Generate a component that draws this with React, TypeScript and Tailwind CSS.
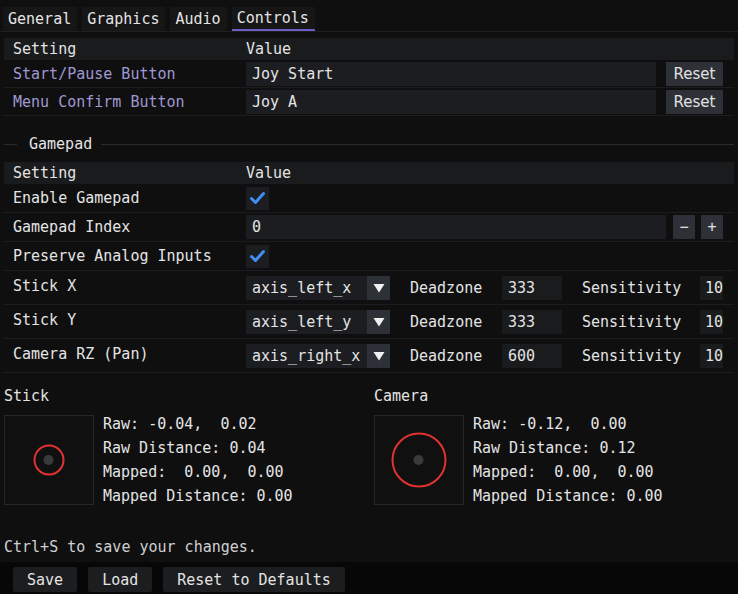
import React from 'react';

const mono = "[font-family:'DejaVu_Sans_Mono',monospace]";

const tabs = ['General', 'Graphics', 'Audio', 'Controls'];

function Check() {
  return (
    <div className="w-[23px] h-[23px] bg-[#1c1d20] flex items-center justify-center">
      <svg width="17" height="17" viewBox="0 0 17 17">
        <polyline
          points="2.5,8.5 6.5,12.5 14.5,3.5"
          fill="none"
          stroke="#3f8ff0"
          strokeWidth="3"
          strokeLinecap="round"
          strokeLinejoin="round"
        />
      </svg>
    </div>
  );
}

function Btn({ children, className = '' }: { children: React.ReactNode; className?: string }) {
  return (
    <div className={`h-[24px] bg-[#2d3137] flex items-center justify-center text-[#e2e2e2] ${className}`}>
      {children}
    </div>
  );
}

function AxisRow({ label, axis, dead }: { label: string; axis: string; dead: string }) {
  return (
    <div className="h-[34px] flex items-center border-b border-[#1c1d1f]">
      <div className="w-[242px] pl-[9px] -mt-[4px]">{label}</div>
      <div className="flex items-center">
        <div className="w-[144px] h-[24px] flex bg-[#1c1d20]">
          <div className="flex-1 pl-[6px] flex items-center">{axis}</div>
          <div className="w-[23px] h-[24px] bg-[#2d3137] flex items-center justify-center">
            <svg width="12" height="10" viewBox="0 0 12 10">
              <polygon points="0.5,1 11.5,1 6,9.5" fill="#f0f0f0" />
            </svg>
          </div>
        </div>
        <div className="ml-[20px] w-[72px]">Deadzone</div>
        <div className="ml-[20px] w-[60px] h-[24px] bg-[#1a1b1d] pl-[6px] flex items-center">{dead}</div>
        <div className="ml-[20px] w-[99px]">Sensitivity</div>
        <div className="ml-[19px] w-[23px] h-[24px] bg-[#1a1b1d] pl-[5px] flex items-center overflow-hidden">10</div>
      </div>
    </div>
  );
}

function Pad({ title, r, lines }: { title: string; r: number; lines: string[] }) {
  return (
    <div className="w-[370px] shrink-0">
      <div className="h-[18px] leading-[18px]">{title}</div>
      <div className="mt-[7px] flex items-center">
        <div className="w-[90px] h-[90px] border border-[#262729] bg-[#101011] flex items-center justify-center">
          <svg width="88" height="88" viewBox="0 0 88 88">
            <circle cx="44" cy="44" r={r} fill="none" stroke="#e0332f" strokeWidth="2" />
            <circle cx="43.5" cy="44" r="5" fill="#3a3a3c" />
          </svg>
        </div>
        <div className="ml-[9px] leading-[24px] whitespace-pre">
          {lines.map((l) => (
            <div key={l}>{l}</div>
          ))}
        </div>
      </div>
    </div>
  );
}

export default function App() {
  return (
    <div className={`w-[738px] h-[594px] bg-[#0f0f10] text-[#e4e4e4] text-[15px] leading-[18px] ${mono} flex flex-col overflow-hidden`}>
      {/* Tabs */}
      <div className="pt-[7px] pl-[3px] flex gap-[5px] border-b border-[#1e1f21]">
        {tabs.map((t) => (
          <div
            key={t}
            className={`h-[24px] pl-[5px] pr-[6px] flex items-center bg-[#161617] ${
              t === 'Controls' ? 'border-b-2 border-[#6e5cc4] bg-[#19191b]' : ''
            }`}
          >
            {t}
          </div>
        ))}
      </div>

      {/* Buttons table */}
      <div className="mt-[6px] mx-[4px]">
        <div className="h-[22px] flex items-center bg-[#1a1b1d]">
          <div className="w-[242px] pl-[9px]">Setting</div>
          <div>Value</div>
        </div>
        {['Start/Pause Button', 'Menu Confirm Button'].map((s, i) => (
          <div key={s} className="h-[28px] flex items-center border-b border-[#1c1d1f]">
            <div className="w-[242px] pl-[9px] text-[#9f98d2]">{s}</div>
            <div className="w-[410px] h-[24px] bg-[#1c1d20] pl-[6px] flex items-center">
              {i === 0 ? 'Joy Start' : 'Joy A'}
            </div>
            <Btn className="ml-[10px] w-[57px] [font-family:'DejaVu_Sans',sans-serif]">Reset</Btn>
          </div>
        ))}
      </div>

      {/* Gamepad separator */}
      <div className="mt-[19px] mx-[4px] h-[18px] flex items-center">
        <div className="w-[13px] h-px bg-[#2a2b2d]" />
        <div className="ml-[12px]">Gamepad</div>
        <div className="ml-[9px] flex-1 h-px bg-[#2a2b2d]" />
      </div>

      {/* Gamepad table */}
      <div className="mt-[9px] mx-[4px]">
        <div className="h-[22px] flex items-center bg-[#1a1b1d]">
          <div className="w-[242px] pl-[9px]">Setting</div>
          <div>Value</div>
        </div>
        <div className="h-[29px] flex items-center border-b border-[#1c1d1f]">
          <div className="w-[242px] pl-[9px]">Enable Gamepad</div>
          <Check />
        </div>
        <div className="h-[29px] flex items-center border-b border-[#1c1d1f]">
          <div className="w-[242px] pl-[9px]">Gamepad Index</div>
          <div className="w-[420px] h-[24px] bg-[#1c1d20] pl-[6px] flex items-center">0</div>
          <Btn className="ml-[7px] w-[22px]">−</Btn>
          <Btn className="ml-[6px] w-[22px]">+</Btn>
        </div>
        <div className="h-[29px] flex items-center border-b border-[#1c1d1f]">
          <div className="w-[242px] pl-[9px]">Preserve Analog Inputs</div>
          <Check />
        </div>
        <AxisRow label="Stick X" axis="axis_left_x" dead="333" />
        <AxisRow label="Stick Y" axis="axis_left_y" dead="333" />
        <AxisRow label="Camera RZ (Pan)" axis="axis_right_x" dead="600" />
      </div>

      {/* Stick previews */}
      <div className="mt-[14px] mx-[4px] flex">
        <Pad
          title="Stick"
          r={14.5}
          lines={['Raw: -0.04,  0.02', 'Raw Distance: 0.04', 'Mapped:  0.00,  0.00', 'Mapped Distance: 0.00']}
        />
        <Pad
          title="Camera"
          r={26.5}
          lines={['Raw: -0.12,  0.00', 'Raw Distance: 0.12', 'Mapped:  0.00,  0.00', 'Mapped Distance: 0.00']}
        />
      </div>

      <div className="mt-[30px] mx-[4px] text-[#cfcfd2]">Ctrl+S to save your changes.</div>

      {/* Footer */}
      <div className="mt-[6px] flex-1 bg-[#070707] pt-[5px] pl-[13px] flex items-start gap-[11px]">
        {['Save', 'Load', 'Reset to Defaults'].map((b) => (
          <div key={b} className="h-[25px] px-[14px] bg-[#1c1d1f] rounded-[2px] flex items-center">
            {b}
          </div>
        ))}
      </div>
    </div>
  );
}
